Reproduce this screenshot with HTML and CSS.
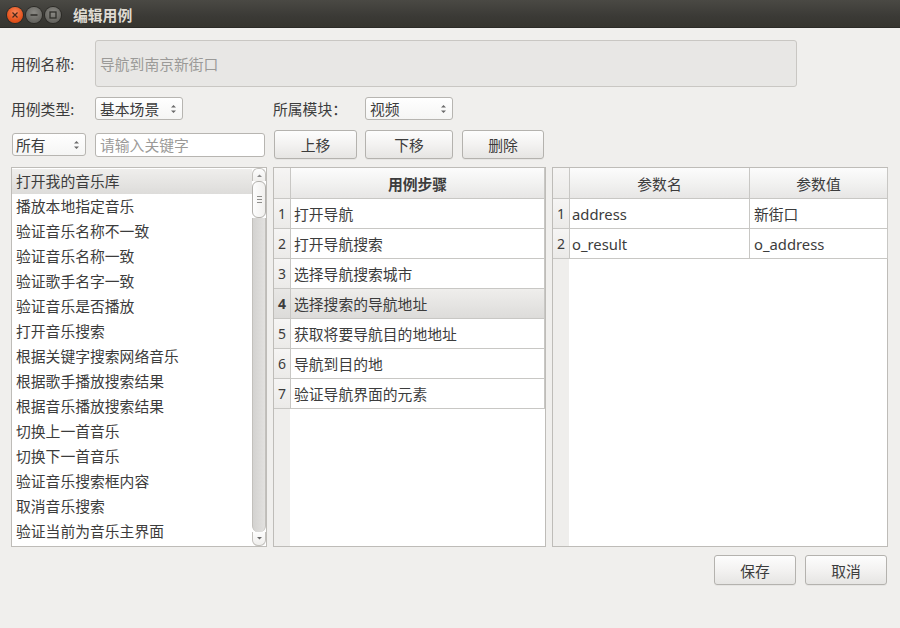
FILE: index.html
```html
<!DOCTYPE html>
<html lang="zh-CN">
<head>
<meta charset="utf-8">
<title>编辑用例</title>
<link rel="stylesheet" href="styles.css">
</head>
<body>
<div class="window">
  <div class="titlebar">
    <div class="wbtns">
      <span class="wb close"><svg width="16" height="16" viewBox="0 0 16 16"><path d="M5.5 5.5 L10.5 10.5 M10.5 5.5 L5.5 10.5" stroke="#4a2a1c" stroke-width="1.2" fill="none"/></svg></span>
      <span class="wb gray"><svg width="16" height="16" viewBox="0 0 16 16"><path d="M4.5 8 H11.5" stroke="#2f2e2a" stroke-width="1.5" fill="none"/></svg></span>
      <span class="wb gray"><svg width="16" height="16" viewBox="0 0 16 16"><rect x="5" y="5" width="6" height="6" stroke="#2f2e2a" stroke-width="1.3" fill="none"/></svg></span>
    </div>
    <div class="title">编辑用例</div>
  </div>

  <div class="content">
    <div class="row row-name">
      <span class="lbl">用例名称:</span>
      <div class="namebox">导航到南京新街口</div>
    </div>

    <div class="row row-type">
      <span class="lbl">用例类型:</span>
      <div class="combo combo-type"><span>基本场景</span><span class="spin"><svg width="7" height="12" viewBox="0 0 7 12"><path d="M1 4.5 L3.5 2 L6 4.5 Z M1 7.5 L3.5 10 L6 7.5 Z" fill="#6a6a6a"/></svg></span></div>
      <span class="lbl lbl-mod">所属模块：</span>
      <div class="combo combo-mod"><span>视频</span><span class="spin"><svg width="7" height="12" viewBox="0 0 7 12"><path d="M1 4.5 L3.5 2 L6 4.5 Z M1 7.5 L3.5 10 L6 7.5 Z" fill="#6a6a6a"/></svg></span></div>
    </div>

    <div class="row row-tools">
      <div class="combo combo-all"><span>所有</span><span class="spin"><svg width="7" height="12" viewBox="0 0 7 12"><path d="M1 4.5 L3.5 2 L6 4.5 Z M1 7.5 L3.5 10 L6 7.5 Z" fill="#6a6a6a"/></svg></span></div>
      <div class="search">请输入关键字</div>
      <button class="btn btn-up">上移</button>
      <button class="btn btn-down">下移</button>
      <button class="btn btn-del">删除</button>
    </div>

    <div class="panels">
      <div class="list">
        <div class="items">
          <div class="item sel">打开我的音乐库</div>
          <div class="item">播放本地指定音乐</div>
          <div class="item">验证音乐名称不一致</div>
          <div class="item">验证音乐名称一致</div>
          <div class="item">验证歌手名字一致</div>
          <div class="item">验证音乐是否播放</div>
          <div class="item">打开音乐搜索</div>
          <div class="item">根据关键字搜索网络音乐</div>
          <div class="item">根据歌手播放搜索结果</div>
          <div class="item">根据音乐播放搜索结果</div>
          <div class="item">切换上一首音乐</div>
          <div class="item">切换下一首音乐</div>
          <div class="item">验证音乐搜索框内容</div>
          <div class="item">取消音乐搜索</div>
          <div class="item">验证当前为音乐主界面</div>
        </div>
        <div class="scrollbar">
          <div class="sb-cap sb-top"><svg width="7" height="5" viewBox="0 0 7 5"><path d="M1 4 L3.5 1.5 L6 4 Z" fill="#8a8a8a"/></svg></div>
          <div class="sb-thumb"><span></span><span></span><span></span></div>
          <div class="sb-track"></div>
          <div class="sb-cap sb-bot"><svg width="7" height="5" viewBox="0 0 7 5"><path d="M1 1 L3.5 3.5 L6 1 Z" fill="#6a6a6a"/></svg></div>
        </div>
      </div>

      <div class="table steps">
        <div class="tr thead">
          <div class="vh corner"></div>
          <div class="th bold">用例步骤</div>
        </div>
        <div class="tr"><div class="vh">1</div><div class="td">打开导航</div></div>
        <div class="tr"><div class="vh">2</div><div class="td">打开导航搜索</div></div>
        <div class="tr"><div class="vh">3</div><div class="td">选择导航搜索城市</div></div>
        <div class="tr cur"><div class="vh">4</div><div class="td">选择搜索的导航地址</div></div>
        <div class="tr"><div class="vh">5</div><div class="td">获取将要导航目的地地址</div></div>
        <div class="tr"><div class="vh">6</div><div class="td">导航到目的地</div></div>
        <div class="tr"><div class="vh">7</div><div class="td">验证导航界面的元素</div></div>
      </div>

      <div class="table params">
        <div class="tr thead">
          <div class="vh corner"></div>
          <div class="th c1">参数名</div>
          <div class="th c2">参数值</div>
        </div>
        <div class="tr"><div class="vh">1</div><div class="td c1">address</div><div class="td c2">新街口</div></div>
        <div class="tr"><div class="vh">2</div><div class="td c1">o_result</div><div class="td c2">o_address</div></div>
      </div>
    </div>

    <div class="footer">
      <button class="btn btn-foot">保存</button>
      <button class="btn btn-foot">取消</button>
    </div>
  </div>
</div>
</body>
</html>
```

FILE: styles.css
```css
* { box-sizing: border-box; }
html, body { margin: 0; padding: 0; }
body {
  width: 900px;
  height: 628px;
  overflow: hidden;
  background: #f0efed;
  font-family: "Noto Sans", "Noto Sans CJK SC", sans-serif;
  font-size: 14.8px;
  color: #3c3c3c;
}
.window { width: 900px; height: 628px; display: flex; flex-direction: column; }

.titlebar {
  height: 28px;
  background: linear-gradient(#4a4944, #3b3a36 60%, #36352f);
  display: flex;
  align-items: center;
  border-bottom: 1px solid #2c2b27;
}
.wbtns { display: flex; align-items: center; margin-left: 7px; gap: 3px; margin-top: 2px; }
.wb {
  width: 16px; height: 16px; border-radius: 50%;
  display: flex; align-items: center; justify-content: center;
}
.wb.close {
  background: radial-gradient(circle at 50% 35%, #f8865a, #e5541e 60%, #c9420f);
  box-shadow: 0 0 0 1px #2b2a26;
}
.wb.gray {
  background: radial-gradient(circle at 50% 35%, #8a8984, #6b6a65 60%, #5a5955);
  box-shadow: 0 0 0 1px #2b2a26;
}
.title {
  margin-left: 12px;
  color: #dfdbd2;
  font-weight: bold;
  font-size: 14.8px;
  font-family: "Noto Sans CJK SC", sans-serif;
  margin-top: 1px;
}

.content { padding: 0 12px 0 11px; display: flex; flex-direction: column; }
.row { display: flex; align-items: center; }
.lbl { width: 84px; flex: none; white-space: nowrap; }

.row-name { margin-top: 12px; height: 47px; }
.namebox {
  width: 702px; height: 47px;
  background: #e8e7e5;
  border: 1px solid #c9c7c3;
  border-radius: 3px;
  color: #9b9a98;
  padding-left: 4px;
  display: flex; align-items: center;
}

.row-type { margin-top: 10px; height: 23px; }
.combo {
  height: 23px;
  border: 1px solid #b7b5b1;
  border-radius: 3px;
  background: linear-gradient(#ffffff, #f5f5f4);
  display: flex; align-items: center; justify-content: space-between;
  padding: 0 5px 0 4px;
  flex: none;
}
.spin { display: flex; align-items: center; }
.combo-type { width: 88px; }
.lbl-mod { margin-left: 90px; width: 92px; }
.combo-mod { width: 88px; }

.row-tools { margin-top: 10px; height: 29px; }
.combo-all { margin-left: 1px; width: 74px; padding-left: 3px; }
.search {
  margin-left: 9px;
  width: 170px; height: 24px;
  border: 1px solid #b7b5b1;
  border-radius: 3px;
  background: #fff;
  color: #9b9a98;
  padding-left: 4px;
  display: flex; align-items: center;
}
.btn {
  font: inherit;
  color: #3c3c3c;
  height: 29px;
  border: 1px solid #b4b2ae;
  border-radius: 3px;
  background: linear-gradient(#fdfdfd, #f3f2f1 50%, #e6e5e3);
  padding: 0;
  flex: none;
  box-shadow: 0 1px 0 rgba(0,0,0,0.04);
}
.btn-up { margin-left: 9px; width: 83px; }
.btn-down { margin-left: 8px; width: 88px; }
.btn-del { margin-left: 9px; width: 82px; }

.panels { margin-top: 8px; height: 380px; display: flex; gap: 6px; }

.list {
  width: 256px;
  border: 1px solid #bebcb8;
  background: #fff;
  display: flex;
}
.items { flex: 1; padding: 1px 0 0 0; overflow: hidden; }
.item {
  height: 25px;
  line-height: 25px;
  padding-left: 4px;
  white-space: nowrap;
}
.item.sel { background: linear-gradient(#efeeec, #dddcda); }
.scrollbar {
  width: 14px;
  display: flex; flex-direction: column;
}
.sb-cap {
  height: 13px;
  display: flex; align-items: center; justify-content: center;
  border: 1px solid #c2c0bc;
  background: linear-gradient(#fdfdfd, #efeeec);
}
.sb-top { border-radius: 6px 6px 0 0; border-bottom: none; }
.sb-bot { border-radius: 0 0 6px 6px; border-top: none; height: 14px; }
.sb-thumb {
  height: 37px;
  border: 1px solid #b2b0ac;
  border-radius: 6px;
  background: linear-gradient(to right, #fdfdfd, #f1f0ee);
  display: flex; flex-direction: column; align-items: center; justify-content: center; gap: 2px;
}
.sb-thumb span { width: 5px; height: 1px; background: #8f8e8b; }
.sb-track {
  flex: 1;
  background: linear-gradient(to right, #d3d2d0, #e2e1df);
  border-left: 1px solid #c2c0bc;
  border-right: 1px solid #c2c0bc;
  border-radius: 0 0 6px 6px;
}

.table {
  border: 1px solid #bebcb8;
  background: linear-gradient(to right, #efeeec 16px, #ffffff 16px);
}
.steps { width: 273px; }
.params { width: 336px; }
.tr { display: flex; height: 30px; }
.tr.thead { height: 31px; }
.vh {
  width: 17px; flex: none;
  display: flex; align-items: center; justify-content: center;
  background: linear-gradient(#f6f5f4, #ebeae8);
  border-right: 1px solid #c8c7c4;
  border-bottom: 1px solid #c8c7c4;
  font-size: 14px;
}
.th {
  display: flex; align-items: center; justify-content: center;
  background: linear-gradient(#fcfcfc, #f2f2f1 50%, #e7e6e5);
  border-right: 1px solid #c8c7c4;
  border-bottom: 1px solid #c8c7c4;
}
.td {
  display: flex; align-items: center;
  padding-left: 3px;
  background: #fff;
  border-right: 1px solid #c8c7c4;
  border-bottom: 1px solid #c8c7c4;
  white-space: nowrap;
}
.steps .th, .steps .td { flex: 1; }
.bold { font-weight: bold; }
.tr.cur .vh { font-weight: bold; background: linear-gradient(#e8e7e5, #dcdbd9); }
.tr.cur .td { background: linear-gradient(#efeeec, #dddcda); }
.params .c1 { width: 180px; flex: none; }
.params .c2 { width: 138px; flex: none; }
.params .td.c1 { padding-left: 2px; }
.params .td.c2 { padding-left: 4px; }

.footer { margin-top: 8px; display: flex; justify-content: flex-end; gap: 9px; padding-right: 1px; }
.btn-foot { width: 82px; height: 30px; }
```
